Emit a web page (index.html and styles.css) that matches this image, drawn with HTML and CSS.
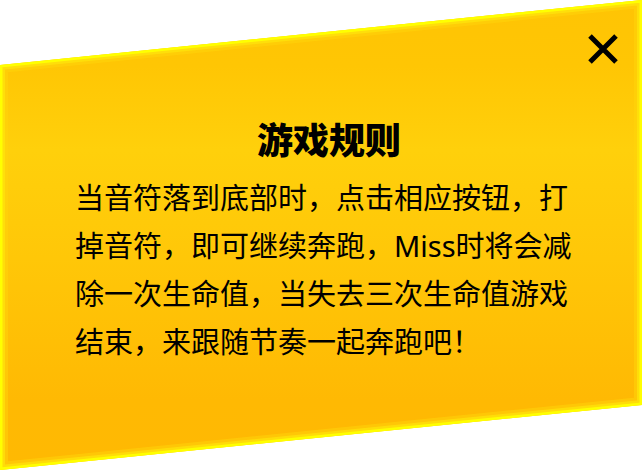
FILE: index.html
```html
<!DOCTYPE html>
<html lang="zh-CN">
<head>
<meta charset="utf-8">
<meta name="viewport" content="width=device-width, initial-scale=1">
<title>游戏规则</title>
<link rel="stylesheet" href="styles.css">
</head>
<body>
<section class="dialog" role="dialog" aria-labelledby="rules-title">
  <svg class="panel" viewBox="0 0 642 470" preserveAspectRatio="none" aria-hidden="true">
    <defs>
      <linearGradient id="fill" x1="0" y1="0" x2="0" y2="1">
        <stop offset="0" stop-color="#ffc404"/>
        <stop offset="0.14" stop-color="#ffc604"/>
        <stop offset="0.32" stop-color="#ffd00b"/>
        <stop offset="0.55" stop-color="#ffc708"/>
        <stop offset="0.85" stop-color="#ffb903"/>
        <stop offset="1" stop-color="#ffb902"/>
      </linearGradient>
      <clipPath id="edge"><path d="M0 65 642 0V405L0 470Z"/></clipPath>
    </defs>
    <g clip-path="url(#edge)">
      <path class="fill" d="M0 65 642 0V405L0 470Z"/>
      <path class="glow glow-outer" d="M0 65 642 0V405L0 470Z"/>
      <path class="glow glow-middle" d="M0 65 642 0V405L0 470Z"/>
      <path class="glow glow-inner" d="M0 65 642 0V405L0 470Z"/>
    </g>
  </svg>
  <div class="content">
    <button class="close" type="button" aria-label="关闭">
      <svg class="cross" viewBox="0 0 30 30" aria-hidden="true"><path d="M2 2 28 28M28 2 2 28"/></svg>
    </button>
    <h1 class="title" id="rules-title">游戏规则</h1>
    <p class="rules">当音符落到底部时，点击相应按钮，打掉音符，即可继续奔跑，Miss时将会减除一次生命值，当失去三次生命值游戏结束，来跟随节奏一起奔跑吧！</p>
  </div>
</section>
</body>
</html>
```
FILE: styles.css
```css
* {
  box-sizing: border-box;
}

body {
  margin: 0;
  background: #fff;
  color: #000;
  font-family: "Noto Sans", "Noto Sans CJK SC", sans-serif;
}

.dialog {
  display: grid;
  min-height: 100vh;
}

.panel,
.content {
  grid-area: 1 / 1;
}

.panel {
  width: 100%;
  height: 100%;
  min-height: 0;
}

.fill {
  fill: url(#fill);
}

.glow {
  fill: none;
  vector-effect: non-scaling-stroke;
}

.glow-outer {
  stroke: #ffd60a;
  stroke-opacity: 0.5;
  stroke-width: 16px;
}

.glow-middle {
  stroke: #ffe60c;
  stroke-opacity: 0.7;
  stroke-width: 10px;
}

.glow-inner {
  stroke: #ffff00;
  stroke-width: 5px;
}

.content {
  display: flex;
  flex-direction: column;
  padding: 34px 24px 0;
}

.close {
  align-self: flex-end;
  display: flex;
  padding: 0;
  border: 0;
  background: none;
  cursor: pointer;
}

.cross {
  width: 30px;
  height: 30px;
  fill: none;
  stroke: #000;
  stroke-width: 5px;
}

.title {
  margin: 50px 0 12px;
  padding-left: 16px;
  font-family: "Noto Sans CJK SC", sans-serif;
  font-size: 36px;
  font-weight: 900;
  line-height: 48px;
  text-align: center;
}

.rules {
  margin: 0 45px 0 51px;
  font-size: 29px;
  font-weight: 400;
  line-height: 48px;
}
```
